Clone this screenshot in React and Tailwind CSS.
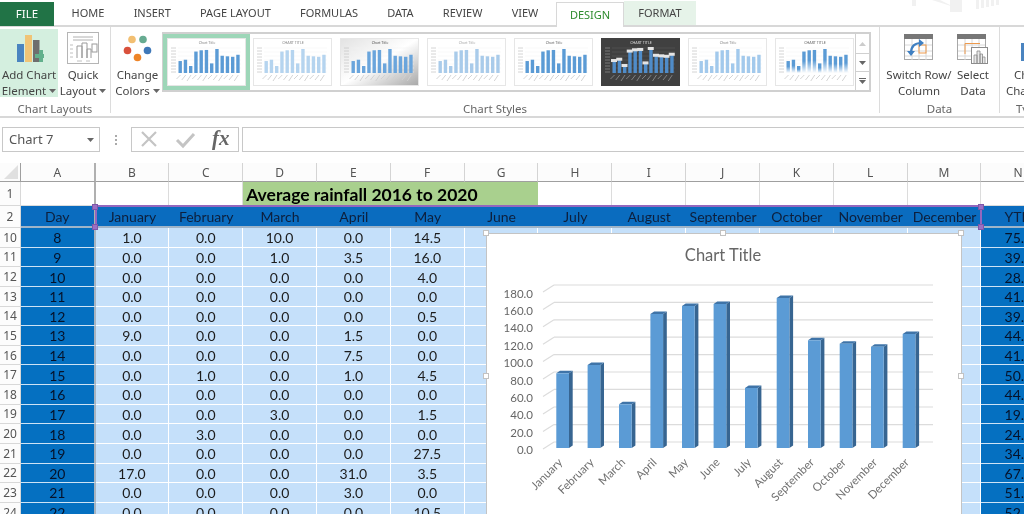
import React from "react";

const tabs = ["HOME", "INSERT", "PAGE LAYOUT", "FORMULAS", "DATA", "REVIEW", "VIEW"];
const cols = ["A", "B", "C", "D", "E", "F", "G", "H", "I", "J", "K", "L", "M", "N"];
const months = ["January", "February", "March", "April", "May", "June", "July", "August", "September", "October", "November", "December"];
const rows = [
  ["1.0", "0.0", "10.0", "0.0", "14.5", "75.5"],
  ["0.0", "0.0", "1.0", "3.5", "16.0", "39.0"],
  ["0.0", "0.0", "0.0", "0.0", "4.0", "28.5"],
  ["0.0", "0.0", "0.0", "0.0", "0.0", "41.0"],
  ["0.0", "0.0", "0.0", "0.0", "0.5", "39.5"],
  ["9.0", "0.0", "0.0", "1.5", "0.0", "44.0"],
  ["0.0", "0.0", "0.0", "7.5", "0.0", "41.0"],
  ["0.0", "1.0", "0.0", "1.0", "4.5", "50.5"],
  ["0.0", "0.0", "0.0", "0.0", "0.0", "44.0"],
  ["0.0", "0.0", "3.0", "0.0", "1.5", "19.5"],
  ["0.0", "3.0", "0.0", "0.0", "0.0", "24.0"],
  ["0.0", "0.0", "0.0", "0.0", "27.5", "34.5"],
  ["17.0", "0.0", "0.0", "31.0", "3.5", "67.0"],
  ["0.0", "0.0", "0.0", "3.0", "0.0", "51.0"],
  ["0.0", "0.0", "0.0", "0.0", "10.5", "52.5"],
];
const tops = [373.3, 365, 404.3, 314, 306, 304, 388, 298, 340.3, 343.7, 346.7, 334];
const barX = [556.3, 587.6, 619, 650.4, 682, 713.6, 745, 776.7, 808, 839.7, 871, 902.7];
const grid = [285, 302.4, 319.8, 337.2, 354.6, 372, 389.4, 407, 424.6, 442];

function Caret({ className }) {
  return (
    <svg width="7" height="4" viewBox="0 0 7 4" className={className}>
      <path d="M0 0H7L3.5 4Z" fill="#666" />
    </svg>
  );
}

function Thumb({ bar, bg = "#fff", title = "Chart Title", titleColor = "#888", fade, dark, labels, gradBg, id, grid: showGrid = true }) {
  const fill = fade ? `url(#fade${id})` : bar;
  return (
    <svg width="79" height="48" viewBox="0 0 79 48" className="block">
      <defs>
        <linearGradient id={`fade${id}`} x1="0" y1="0" x2="0" y2="1">
          <stop offset="0.45" stopColor={bar} />
          <stop offset="1" stopColor="#fff" />
        </linearGradient>
        <linearGradient id={`bg${id}`} x1="0" y1="0" x2="1" y2="1">
          <stop offset="0" stopColor="#e2e2e2" />
          <stop offset="0.5" stopColor="#ffffff" />
          <stop offset="1" stopColor="#a8a8a8" />
        </linearGradient>
      </defs>
      <rect x="0.5" y="0.5" width="78" height="47" fill={gradBg ? `url(#bg${id})` : bg} stroke={dark ? "#404040" : "#e6e6e6"} />
      <text x="40" y="6" textAnchor="middle" fontSize="3.6" fontFamily="Lato, sans-serif" fill={titleColor}>{title}</text>
      {showGrid && [10, 14, 18, 22, 26, 30, 34].map((y) => (
        <line key={y} x1="11" x2="74" y1={y} y2={y} stroke={dark ? "#5c5c5c" : "#f0f0f0"} strokeWidth="0.5" />
      ))}
      {[10, 13, 16, 19, 22, 25, 28, 31, 34].map((y) => (
        <line key={y} x1="4" x2="9" y1={y} y2={y} stroke={dark ? "#888" : "#c9c9c9"} strokeWidth="0.8" />
      ))}
      {tops.map((t, i) => {
        const h = ((448 - t) / 150) * 24;
        const x = 11.5 + i * 5.25;
        return (
          <g key={i}>
            <rect x={x} y={35 - h} width="3.4" height={h} fill={fill} />
            <line x1={x + 2} y1="37" x2={x - 2} y2={41 + (i % 3)} stroke={dark ? "#888" : "#cfcfcf"} strokeWidth="0.9" />
            {labels && <rect x={x - 1.5} y={33 - h} width="6" height="3" fill="#e4e4e4" />}
          </g>
        );
      })}
    </svg>
  );
}

function Big({ lines, icon, active, w }) {
  return (
    <div className={`flex flex-col items-center h-[68px] shrink-0 ${active ? "bg-[#d4efdf]" : ""} ${w}`}>
      <div className="h-[38px] flex items-start justify-center shrink-0">{icon}</div>
      {lines.map((l, i) => (
        <div key={i} className="text-[11.500px] leading-[16px] text-[#444] whitespace-nowrap flex items-center gap-[3px]">
          {l.replace("▾", "")}
          {l.endsWith("▾") && <Caret />}
        </div>
      ))}
    </div>
  );
}

const AddIcon = (
  <svg width="30" height="30" viewBox="0 0 30 30" className="mt-[5px]">
    <rect x="3" y="10" width="7" height="18" fill="#4a84c0" />
    <rect x="11" y="1" width="7" height="27" fill="#f0c476" />
    <rect x="19" y="6" width="6.5" height="22" fill="#6e6e6e" />
    <path d="M22 19h4v-4h4v4h4v4h-4v4h-4v-4h-4z" transform="translate(-1 1)" fill="#62b08c" />
  </svg>
);
const QuickIcon = (
  <svg width="33" height="33" viewBox="0 0 33 33" className="mt-[3px]">
    <rect x="0.5" y="0.5" width="31" height="31" fill="#fff" stroke="#b5b5b5" />
    <path d="M6 5h20M6 8h20" stroke="#b0b0b0" />
    <path d="M10 26V14h5v12M15 26V11h5v15M20 26V17h4v9" fill="#fff" stroke="#9a9a9a" />
    <rect x="25" y="12" width="5" height="8" fill="#fff" stroke="#9a9a9a" />
    <path d="M3 13h3M3 17h3M3 21h3M3 25h3M10 29h5M19 29h4" stroke="#c0c0c0" />
  </svg>
);
const ColorsIcon = (
  <svg width="30" height="30" viewBox="0 0 30 30" className="mt-[6px]">
    <circle cx="9" cy="4.5" r="3.8" fill="#f2bf72" />
    <circle cx="20" cy="4.5" r="3.8" fill="#67ab91" />
    <circle cx="4.5" cy="15.5" r="3.8" fill="#d9513c" />
    <circle cx="24.5" cy="15.5" r="3.8" fill="#3f78b8" />
    <circle cx="14.5" cy="22.5" r="3.8" fill="#ee8427" />
  </svg>
);
const SwitchIcon = (
  <svg width="30" height="28" viewBox="0 0 30 28" className="mt-[5px]">
    <rect x="0.5" y="0.5" width="28" height="25" fill="#fff" stroke="#a8a8a8" />
    <rect x="0" y="0" width="29" height="5" fill="#777" />
    <path d="M1 11h27M1 17h27M1 22h27M8 5v21M15 5v21M22 5v21" stroke="#d8d8d8" />
    <rect x="15" y="11" width="7" height="8" fill="none" stroke="#ee9a4d" />
    <path d="M7 19c0-7 4-10 10-10" fill="none" stroke="#3f7fc1" strokeWidth="2.2" />
    <path d="M15 5l5 4-5 4zM3 17l8 0-4 5z" fill="#3f7fc1" />
  </svg>
);
const SelectIcon = (
  <svg width="32" height="31" viewBox="0 0 32 31" className="mt-[5px]">
    <rect x="0.5" y="0.5" width="28" height="25" fill="#fff" stroke="#a8a8a8" />
    <rect x="0" y="0" width="29" height="5" fill="#777" />
    <path d="M1 11h27M1 17h27M1 22h27M8 5v21M15 5v21M22 5v21" stroke="#d8d8d8" />
    <path d="M8 20V9.500h15" fill="none" stroke="#ee9a4d" />
    <rect x="14.500" y="13.500" width="16" height="16" fill="#fff" stroke="#8c8c8c" />
    <path d="M17 29v-8h3v8M20 29V17h3v12M23 29v-9h2.500v9M25.500 29v-6H28v6" fill="#e8e8e8" stroke="#8c8c8c" strokeWidth="0.8" />
  </svg>
);

function Label({ children }) {
  return <div className="h-[16px] -mb-[4px] text-center text-[11.500px] leading-[16px] text-[#666] whitespace-nowrap">{children}</div>;
}

function Ribbon() {
  return (
    <div className="h-[91px] flex border-b-2 border-[#d8d8d8] shrink-0 overflow-hidden">
      <div className="w-[111px] shrink-0 flex flex-col justify-between pt-[2px] border-r border-[#dcdcdc] mb-[3px]">
        <div className="flex">
          <Big lines={["Add Chart", "Element▾"]} icon={AddIcon} active w="w-[58px]" />
          <Big lines={["Quick", "Layout▾"]} icon={QuickIcon} w="w-[50px]" />
        </div>
        <Label>Chart Layouts</Label>
      </div>
      <div className="w-[769px] shrink-0 flex flex-col justify-between pt-[2px] border-r border-[#dcdcdc] mb-[3px]">
        <div className="flex">
          <Big lines={["Change", "Colors▾"]} icon={ColorsIcon} w="w-[51px] pl-[2px]" />
          <div className="w-[709px] h-[60px] mt-[3px] flex border-2 border-[#d0d0d0] shrink-0">
            <div className="w-[87px] h-[56px] border-[4px] border-[#9dd6b8] shrink-0 flex items-center justify-center -ml-[1px]">
              <Thumb id="a" bar="#5b9bd5" title="Chart Title" />
            </div>
            <div className="flex gap-[8px] ml-[3px] pt-[4px]">
              <Thumb id="b" bar="#b5d4ef" title="CHART TITLE" />
              <Thumb id="c" bar="#6aa5dc" gradBg titleColor="#555" />
              <Thumb id="d" bar="#a9cbea" titleColor="#aaa" />
              <Thumb id="e" bar="#5b9bd5" titleColor="#666" />
              <Thumb id="f" bar="#4f8cc9" bg="#404040" dark labels title="CHART TITLE" titleColor="#ddd" />
              <Thumb id="g" bar="#a2c9ec" />
              <Thumb id="h" bar="#5b9bd5" fade title="CHART TITLE" titleColor="#666" />
            </div>
            <div className="ml-auto w-[14px] flex flex-col border-l border-[#d0d0d0] shrink-0">
              <div className="h-[19px] flex items-center justify-center"><svg width="7" height="4" viewBox="0 0 7 4"><path d="M0 4H7L3.5 0Z" fill="#ccc" /></svg></div>
              <div className="h-[19px] flex items-center justify-center border-y border-[#d0d0d0]"><Caret /></div>
              <div className="flex-1 flex flex-col gap-[1px] items-center justify-center"><div className="w-[7px] h-[1px] bg-[#666]" /><Caret /></div>
            </div>
          </div>
        </div>
        <Label>Chart Styles</Label>
      </div>
      <div className="w-[120px] shrink-0 flex flex-col justify-between pt-[2px] border-r border-[#dcdcdc] mb-[3px]">
        <div className="flex pl-[6px]">
          <Big lines={["Switch Row/", "Column"]} icon={SwitchIcon} w="w-[66px]" />
          <Big lines={["Select", "Data"]} icon={SelectIcon} w="w-[42px]" />
        </div>
        <Label>Data</Label>
      </div>
      <div className="w-[24px] shrink-0 flex flex-col justify-between pt-[2px] mb-[3px] overflow-hidden">
        <div className="h-[68px] pl-[6px]">
          <div className="h-[38px] pl-[15px] pt-[14px]"><div className="w-[6px] h-[18px] bg-[#4a84c0]" /></div>
          <div className="text-[11.500px] leading-[16px] text-[#444] pl-[8px] whitespace-nowrap">Change</div>
          <div className="text-[11.500px] leading-[16px] text-[#444] whitespace-nowrap">Chart Type</div>
        </div>
        <Label><span className="pl-[16px]">Type</span></Label>
      </div>
    </div>
  );
}

function FormulaBar() {
  return (
    <div className="h-[35px] pt-[9px] flex shrink-0">
      <div className="w-[98px] h-[25px] ml-[2px] border border-[#c8c8c8] flex items-center justify-between pl-[6px] pr-[5px] text-[13px] text-[#555] shrink-0">
        Chart 7
        <Caret />
      </div>
      <div className="w-[31px] flex flex-col items-center justify-center gap-[2px] shrink-0">
        <div className="w-[2px] h-[2px] bg-[#aaa]" />
        <div className="w-[2px] h-[2px] bg-[#aaa]" />
        <div className="w-[2px] h-[2px] bg-[#aaa]" />
      </div>
      <div className="w-[108px] h-[25px] border border-[#c8c8c8] flex items-center shrink-0">
        <svg width="76" height="23" viewBox="0 0 76 23" className="ml-[8px] shrink-0">
          <path d="M2 4L16 18M16 4L2 18" stroke="#c4c4c4" strokeWidth="2.200" fill="none" />
          <path d="M37 12l6 6L54 6" stroke="#c4c4c4" strokeWidth="3" fill="none" />
        </svg>
        <span className="font-['Liberation_Serif',serif] italic font-bold text-[21px] leading-none text-[#666] -ml-[4px] -mt-[2px]">fx</span>
      </div>
      <div className="flex-1 h-[25px] ml-[3px] border border-[#c8c8c8] border-r-0" />
    </div>
  );
}

const cBase = "flex items-center justify-center whitespace-nowrap overflow-hidden pt-[1px]";
const colW = "grid-cols-[21px_74.500px_repeat(12,73.830px)_74px]";
const rowH = "grid-rows-[19px_24px_22px_repeat(15,19.640px)]";

function Handle({ className }) {
  return <div className={`absolute w-[6px] h-[6px] bg-[#9b6fc4] border border-[#7e57a8] ${className}`} />;
}
function WH({ className }) {
  return <div className={`absolute w-[6px] h-[6px] bg-white border border-[#c2c2c2] ${className}`} />;
}

function Chart() {
  return (
    <svg width="474" height="300" viewBox="487 234 474 300" className="block">
      <text x="723" y="261" textAnchor="middle" fontSize="16.500" fill="#666" fontFamily="Lato, sans-serif">Chart Title</text>
      {grid.map((y) => (
        <g key={y} stroke="#dcdcdc" strokeWidth="1.200" fill="none">
          <line x1="554" x2="933" y1={y} y2={y} />
          <line x1="543" x2="554" y1={y + 7} y2={y} />
        </g>
      ))}
      {grid.map((_, i) => (
        <text key={i} x="533" y={297.500 + i * 17.400} textAnchor="end" fontSize="11.500" fill="#666" fontFamily="Lato, sans-serif">
          {(180 - i * 20).toFixed(1)}
        </text>
      ))}
      {tops.map((t, i) => {
        const x = barX[i];
        return (
          <g key={i}>
            <path d={`M${x + 12.700} ${t}l3.700 -2.500V445.500L${x + 12.700} 448Z`} fill="#376591" />
            <path d={`M${x} ${t}l3.700 -2.500h12.700l-3.700 2.500Z`} fill="#3f74a8" />
            <rect x={x} y={t} width="12.700" height={448 - t} fill="#5b9bd5" />
          </g>
        );
      })}
      {months.map((m, i) => (
        <text
          key={m}
          textAnchor="end"
          fontSize="11.500"
          fill="#707070"
          fontFamily="Lato, sans-serif"
          transform={`translate(${barX[i] + 7} 463) rotate(-45)`}
        >
          {m}
        </text>
      ))}
    </svg>
  );
}

function Sheet() {
  const head = "text-[12px] text-[#555] font-['Noto_Sans',sans-serif]";
  const numCell = `${cBase} ${head} bg-[#fcfcfc] border-r border-b border-[#d8d8d8]`;
  return (
    <div className="relative mt-[10px] flex-1 min-h-0 overflow-hidden">
      <div className={`grid ${colW} ${rowH} w-[1056px] text-[#1c1c1c] font-['Lato',sans-serif] text-[14px]`}>
        <div className="bg-[#fcfcfc] border-r border-b border-[#9f9f9f] flex items-end justify-end p-[2px]">
          <svg width="14" height="14" viewBox="0 0 14 14"><path d="M14 0V14H0Z" fill="#e0e0e0" /></svg>
        </div>
        {cols.map((c) => (
          <div key={c} className={`${cBase} ${head} bg-[#fcfcfc] border-r border-b border-[#d4d4d4] border-b-[#9f9f9f] ${c === "A" ? "border-r-2 border-r-[#b0b0b0]" : ""}`}>{c}</div>
        ))}

        <div className={numCell}>1</div>
        <div className="bg-white border-r-2 border-r-[#b0b0b0] border-b border-[#dcdcdc]" />
        <div className="bg-white border-r border-b border-[#dcdcdc]" />
        <div className="bg-white border-r border-b border-[#dcdcdc]" />
        <div className="col-span-4 bg-[#a9d08e] flex items-center pl-[3px] pt-[3px] font-bold text-[17.500px] text-black whitespace-nowrap">Average rainfall 2016 to 2020</div>
        {cols.slice(7).map((c) => (
          <div key={c} className="bg-white border-r border-b border-[#dcdcdc]" />
        ))}

        <div className={numCell}>2</div>
        <div className={`${cBase} bg-[#0a6cbf] text-[#0d1f3c] border-r-2 border-r-[#b0b0b0] border-b-2 border-b-[#9fb4c8]`}>Day</div>
        {months.map((m) => (
          <div key={m} className={`${cBase} bg-[#0a6cbf] text-[#0d1f3c] border-b-2 border-b-[#9fb4c8]`}>{m}</div>
        ))}
        <div className={`${cBase} bg-[#0a6cbf] text-[#0d1f3c] border-b-2 border-b-[#9fb4c8]`}>YTD</div>

        {rows.map((r, i) => (
          <React.Fragment key={i}>
            <div className={numCell}>{i + 10}</div>
            <div className={`${cBase} bg-[#0570c1] text-[#06122a] border-r-2 border-r-[#a8b4c0] border-b border-b-[#cfe3f5]`}>{i + 8}</div>
            {cols.slice(1, 13).map((c, j) => (
              <div key={c} className={`${cBase} bg-[#c5e0fa] border-r border-b border-white`}>{j < 5 ? r[j] : ""}</div>
            ))}
            <div className={`${cBase} bg-[#0570c1] text-[#06122a] border-b border-b-[#cfe3f5]`}>{r[5]}</div>
          </React.Fragment>
        ))}
      </div>

      {/* chart data range selection */}
      <div className="absolute left-[95px] top-[42px] w-[887px] h-[22px] border-t-2 border-x-2 border-[#9467be]" />
      <Handle className="left-[92px] top-[41px]" />
      <Handle className="left-[92px] top-[61px]" />
      <Handle className="left-[978px] top-[41px]" />
      <Handle className="left-[978px] top-[61px]" />

      {/* chart object */}
      <div className="absolute left-[486px] top-[70px] w-[476px] h-[300px] bg-white border border-[#c4c4c4] overflow-hidden">
        <Chart />
      </div>
      <WH className="left-[483px] top-[67px]" />
      <WH className="left-[720px] top-[67px]" />
      <WH className="left-[958px] top-[67px]" />
      <WH className="left-[483px] top-[210px]" />
      <WH className="left-[958px] top-[210px]" />
    </div>
  );
}

export default function App() {
  return (
    <div className="w-[1024px] h-[514px] overflow-hidden bg-white flex flex-col relative font-['Noto_Sans',sans-serif] blur-[0.35px]">
      <div className="h-[27px] flex items-end border-b-2 border-[#d8d8d8] shrink-0 relative">
        <div className="w-[54px] h-[24px] bg-[#217346] text-white text-[11.500px] flex items-center justify-center shrink-0 -mb-[1px]">FILE</div>
        <div className="flex ml-[3px] h-[24px]">
          {tabs.map((t) => (
            <div key={t} className="px-[14.600px] text-[11px] text-[#444] flex items-center whitespace-nowrap">{t}</div>
          ))}
        </div>
        <div className="h-[25px] ml-[3px] -mb-[2px] px-[13px] bg-white border border-b-0 border-[#d8d8d8] text-[11px] text-[#2e8b2e] flex items-center">DESIGN</div>
        <div className="h-[24px] px-[14px] bg-[#e6f3e9] text-[11px] text-[#444] flex items-center">FORMAT</div>
        <svg width="114" height="13" viewBox="0 0 114 13" className="absolute right-0 top-0">
          <path d="M2 0h4v6H2zM22 0h8l14 7v0L22 0zM40 0h12v12H40z M66 0h3v9h-3zM71 0h3v8h-3zM76 0h3v7h-3zM81 0h3v6h-3zM86 0h3v5h-3z" fill="#f1f1f1" />
        </svg>
      </div>
      <Ribbon />
      <FormulaBar />
      <Sheet />
    </div>
  );
}
